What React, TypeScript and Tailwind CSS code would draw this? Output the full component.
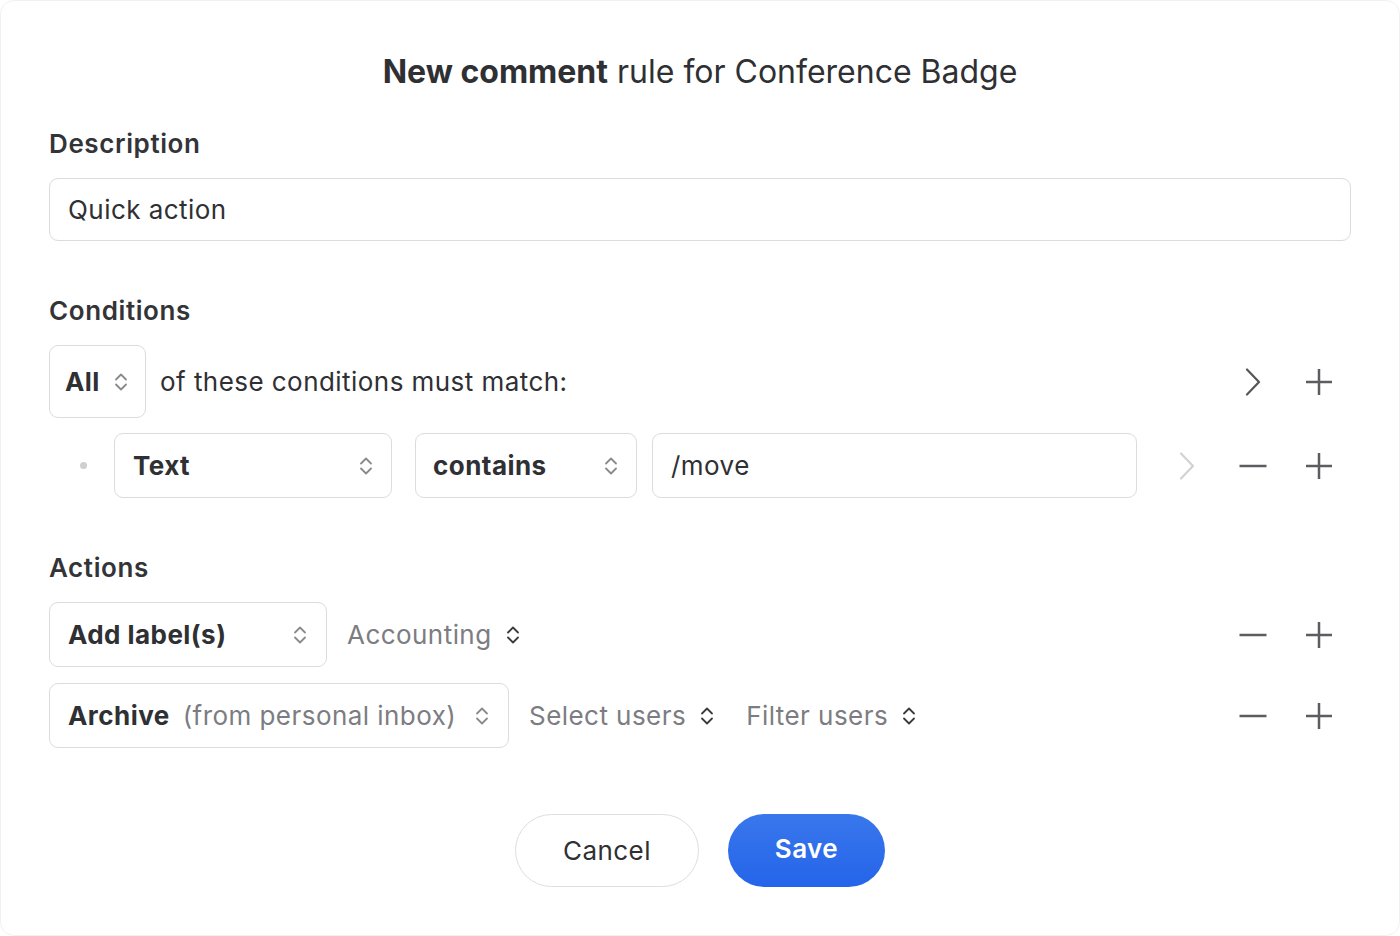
import React from 'react';

const UpDown = ({ className = 'text-[#8a8a8a]' }: { className?: string }) => (
  <svg className={`w-[14px] h-[22px] shrink-0 ${className}`} viewBox="0 0 14 22" fill="none" stroke="currentColor" strokeWidth={1.8} strokeLinecap="round" strokeLinejoin="round">
    <path d="M2 8.5 7 3.5l5 5" />
    <path d="M2 13.5 7 18.5l5-5" />
  </svg>
);

const ChevronRight = ({ light = false }: { light?: boolean }) => (
  <svg className={`w-[18px] h-[28px] ${light ? 'text-[#d2d2d2]' : 'text-[#555659]'}`} viewBox="0 0 18 28" fill="none" stroke="currentColor" strokeWidth={2.2} strokeLinecap="round" strokeLinejoin="round">
    <path d="M3 1.5 15 14 3 26.5" />
  </svg>
);

const Plus = () => (
  <svg className="w-[28px] h-[28px] text-[#5c5d60]" viewBox="0 0 28 28" fill="none" stroke="currentColor" strokeWidth={2.5}>
    <path d="M14 1v26M1 14h26" />
  </svg>
);

const Minus = () => (
  <svg className="w-[28px] h-[28px] text-[#5c5d60]" viewBox="0 0 28 28" fill="none" stroke="currentColor" strokeWidth={2.5}>
    <path d="M0.5 14h27" />
  </svg>
);

const IconSlot = ({ children }: { children?: React.ReactNode }) => (
  <div className="w-[40px] h-[40px] flex items-center justify-center">{children}</div>
);

const SectionLabel = ({ children }: { children: React.ReactNode }) => (
  <div className="text-[26px] leading-[32px] font-semibold tracking-[0.6px] text-[#333438]">{children}</div>
);

const InlineSelect = ({ label }: { label: string }) => (
  <div className="flex items-center gap-[14px] text-[#7c7d82]">
    <span>{label}</span>
    <UpDown className="text-[#3a3b3e]" />
  </div>
);

export default function App() {
  return (
    <div className="w-[1400px] h-[936px] bg-white" style={{ fontFamily: 'Inter, "Noto Sans", sans-serif' }}>
      <div className="h-full rounded-[14px] border border-[#f1f1f1] px-12 pt-[51px] text-[26px] tracking-[0.45px] text-[#2f3034]">
        <h1 className="text-center text-[32px] leading-[40px] tracking-normal text-[#2f3034]">
          <span className="font-bold">New comment</span> rule for Conference Badge
        </h1>

        <div className="mt-[36px]">
          <SectionLabel>Description</SectionLabel>
          <div className="mt-[18px] h-[63px] rounded-[9px] border-[1.5px] border-[#dcdcdc] flex items-center pl-[18px]">
            Quick action
          </div>
        </div>

        <div className="mt-[54px]">
          <SectionLabel>Conditions</SectionLabel>
          <div className="mt-[18px] flex items-center">
            <div className="h-[73px] w-[97px] rounded-[9px] border-[1.5px] border-[#dcdcdc] flex items-center justify-between pl-[15px] pr-[17px]">
              <span className="font-bold">All</span>
              <UpDown />
            </div>
            <span className="ml-[14px]">of these conditions must match:</span>
            <div className="flex-1" />
            <div className="flex items-center gap-[26px] mr-3">
              <IconSlot><ChevronRight /></IconSlot>
              <IconSlot><Plus /></IconSlot>
            </div>
          </div>

          <div className="mt-[15px] flex items-center">
            <div className="ml-[31px] w-[7px] h-[7px] rounded-full bg-[#cfcfcf]" />
            <div className="ml-[27px] h-[65px] w-[278px] rounded-[9px] border-[1.5px] border-[#dcdcdc] flex items-center justify-between pl-[18px] pr-[18px]">
              <span className="font-bold">Text</span>
              <UpDown />
            </div>
            <div className="ml-[23px] h-[65px] w-[222px] rounded-[9px] border-[1.5px] border-[#dcdcdc] flex items-center justify-between pl-[17px] pr-[18px]">
              <span className="font-bold">contains</span>
              <UpDown />
            </div>
            <div className="ml-[15px] h-[65px] w-[485px] rounded-[9px] border-[1.5px] border-[#dcdcdc] flex items-center pl-[18px]">
              /move
            </div>
            <div className="flex-1" />
            <div className="flex items-center gap-[26px] mr-3">
              <IconSlot><ChevronRight light /></IconSlot>
              <IconSlot><Minus /></IconSlot>
              <IconSlot><Plus /></IconSlot>
            </div>
          </div>
        </div>

        <div className="mt-[54px]">
          <SectionLabel>Actions</SectionLabel>
          <div className="mt-[18px] flex items-center">
            <div className="h-[65px] w-[278px] rounded-[9px] border-[1.5px] border-[#dcdcdc] flex items-center justify-between pl-[18px] pr-[19px]">
              <span className="font-bold">Add label(s)</span>
              <UpDown />
            </div>
            <div className="ml-[20px]">
              <InlineSelect label="Accounting" />
            </div>
            <div className="flex-1" />
            <div className="flex items-center gap-[26px] mr-3">
              <IconSlot><Minus /></IconSlot>
              <IconSlot><Plus /></IconSlot>
            </div>
          </div>

          <div className="mt-[16px] flex items-center">
            <div className="h-[65px] w-[460px] rounded-[9px] border-[1.5px] border-[#dcdcdc] flex items-center pl-[18px] pr-[19px]">
              <span className="font-bold">Archive</span>
              <span className="ml-[13px] text-[#7c7d82]">(from personal inbox)</span>
              <div className="flex-1" />
              <UpDown />
            </div>
            <div className="ml-[20px]">
              <InlineSelect label="Select users" />
            </div>
            <div className="ml-[32px]">
              <InlineSelect label="Filter users" />
            </div>
            <div className="flex-1" />
            <div className="flex items-center gap-[26px] mr-3">
              <IconSlot><Minus /></IconSlot>
              <IconSlot><Plus /></IconSlot>
            </div>
          </div>
        </div>

        <div className="mt-[66px] flex justify-center gap-[29px]">
          <button className="h-[73px] w-[184px] rounded-full border-[1.5px] border-[#dedede] bg-white text-[#2f3034]">
            Cancel
          </button>
          <button className="h-[73px] w-[157px] rounded-full bg-gradient-to-b from-[#3977ec] to-[#2464e9] text-white font-semibold pb-[4px]">
            Save
          </button>
        </div>
      </div>
    </div>
  );
}
